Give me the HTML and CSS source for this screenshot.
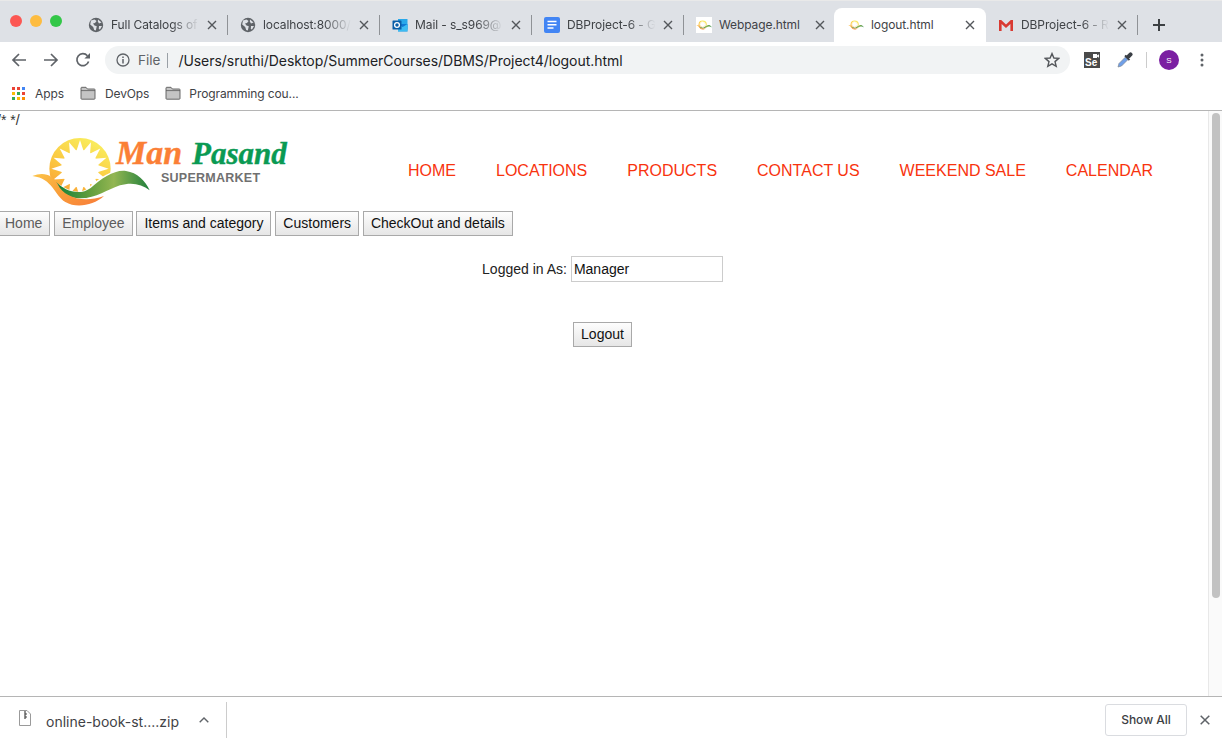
FILE: index.html
```html
<!DOCTYPE html>
<html lang="en">
<head>
    <meta charset="UTF-8">
    <title>logout.html</title>
    <link rel="stylesheet" href="styles.css">
</head>
<body>

    <!-- Shared icons -->
    <svg class="icon-defs" width="0" height="0" aria-hidden="true">
        <defs>
            <linearGradient id="sunFill" x1="0.7" y1="0" x2="0.2" y2="1">
                <stop offset="0" stop-color="#f9ee5e"/>
                <stop offset="0.55" stop-color="#fbc63f"/>
                <stop offset="1" stop-color="#f99a35"/>
            </linearGradient>
            <linearGradient id="leafFill" x1="0" y1="0" x2="1" y2="0">
                <stop offset="0" stop-color="#0f7f3a"/>
                <stop offset="0.35" stop-color="#5f9c3c"/>
                <stop offset="0.62" stop-color="#93b652"/>
                <stop offset="1" stop-color="#1f7f3c"/>
            </linearGradient>
            <linearGradient id="swooshFill" x1="0" y1="0" x2="1" y2="0.6">
                <stop offset="0" stop-color="#fcc448"/>
                <stop offset="0.5" stop-color="#f9a13a"/>
                <stop offset="1" stop-color="#f8843a"/>
            </linearGradient>
            <symbol id="logoMark" viewBox="90 75 360 220">
                <circle cx="240" cy="176" r="92" fill="url(#sunFill)"/>
                <g transform="translate(240 176)" fill="#fff">
                    <circle r="56"/>
                    <path id="ray" d="M-11 -52 L0 -86 L11 -52Z"/>
                    <use href="#ray" transform="rotate(22.5)"/>
                    <use href="#ray" transform="rotate(45)"/>
                    <use href="#ray" transform="rotate(67.5)"/>
                    <use href="#ray" transform="rotate(90)"/>
                    <use href="#ray" transform="rotate(112.5)"/>
                    <use href="#ray" transform="rotate(135)"/>
                    <use href="#ray" transform="rotate(157.5)"/>
                    <use href="#ray" transform="rotate(180)"/>
                    <use href="#ray" transform="rotate(202.5)"/>
                    <use href="#ray" transform="rotate(225)"/>
                    <use href="#ray" transform="rotate(247.5)"/>
                    <use href="#ray" transform="rotate(270)"/>
                    <use href="#ray" transform="rotate(292.5)"/>
                    <use href="#ray" transform="rotate(315)"/>
                    <use href="#ray" transform="rotate(337.5)"/>
                </g>
                <path d="M150 205 C190 235 235 262 268 232 C300 200 340 178 372 181 C410 186 436 212 449 241 C425 220 395 214 360 224 C320 236 290 268 235 268 C195 268 170 245 150 205Z" fill="#fff"/>
                <path d="M166 214 C195 245 240 258 272 234 C305 205 345 178 378 183 C412 188 436 212 449 241 C425 222 395 216 360 226 C322 238 285 268 235 265 C200 263 176 243 166 214Z" fill="url(#leafFill)"/>
                <path d="M97 198 C130 184 160 194 174 224 C190 258 245 282 312 258 C280 286 230 296 196 276 C162 256 160 206 97 198Z" fill="url(#swooshFill)"/>
            </symbol>
            <symbol id="globe" viewBox="0 0 16 16">
                <circle cx="8" cy="8" r="7.2" fill="#5f6368"/>
                <path d="M3 3.5 L6.5 2.6 L8.6 4 L7 6 L5 6.4 L6.5 8.6 L8.8 9.2 L7.8 13.6 L6.2 13 L5.2 10 L2.2 7.5Z M10 2.5 L13.6 5.5 L11 6.5 L9.8 4.6Z M11 9 L14 9 L12 12.5 L10.8 12Z" fill="#dee1e6"/>
            </symbol>
            <symbol id="closeX" viewBox="0 0 10 10">
                <path d="M1 1 L9 9 M9 1 L1 9" stroke="#54575b" stroke-width="1.4" fill="none"/>
            </symbol>
            <symbol id="folder" viewBox="0 0 16 14">
                <path d="M1 12.5 V2 C1 1.6 1.3 1.3 1.7 1.3 H6 L7.4 3 H14.3 C14.7 3 15 3.3 15 3.7 V12.5 C15 12.9 14.7 13.2 14.3 13.2 H1.7 C1.3 13.2 1 12.9 1 12.5Z" fill="#c4c4c4" stroke="#5a5a5a" stroke-width="0.9"/>
                <path d="M1 4.6 H15" stroke="#5a5a5a" stroke-width="0.8"/>
            </symbol>
        </defs>
    </svg>

    <div class="browser">

        <!-- Tab strip -->
        <div class="tab-strip">
            <div class="window-lights">
                <span class="light light-red"></span>
                <span class="light light-yellow"></span>
                <span class="light light-green"></span>
            </div>

            <div class="tab">
                <svg class="tab-icon"><use href="#globe"/></svg>
                <span class="tab-title fade">Full Catalogs of</span>
                <svg class="tab-close"><use href="#closeX"/></svg>
            </div>
            <span class="tab-sep"></span>

            <div class="tab">
                <svg class="tab-icon"><use href="#globe"/></svg>
                <span class="tab-title fade">localhost:8000/</span>
                <svg class="tab-close"><use href="#closeX"/></svg>
            </div>
            <span class="tab-sep"></span>

            <div class="tab">
                <svg class="tab-icon" viewBox="0 0 16 16">
                    <path d="M6 2 H15.5 V12.5 H6Z" fill="#28a8ea"/>
                    <path d="M6 7 L15.5 7 V14.5 H6Z" fill="#0f78d4"/>
                    <path d="M6 7 L10.7 10 L15.5 7 V14.5 H6Z" fill="#50d9ff" opacity="0.7"/>
                    <rect x="0.5" y="3.5" width="9" height="9" rx="0.6" fill="#0a5ea8"/>
                    <circle cx="5" cy="8" r="2.4" fill="none" stroke="#fff" stroke-width="1.3"/>
                </svg>
                <span class="tab-title fade">Mail - s_s969@</span>
                <svg class="tab-close"><use href="#closeX"/></svg>
            </div>
            <span class="tab-sep"></span>

            <div class="tab">
                <svg class="tab-icon" viewBox="0 0 16 16">
                    <rect width="16" height="16" rx="2" fill="#4285f4"/>
                    <path d="M3.5 4.5 H12.5 M3.5 7.8 H12.5 M3.5 11 H9.5" stroke="#fff" stroke-width="1.5"/>
                </svg>
                <span class="tab-title fade">DBProject-6 - G</span>
                <svg class="tab-close"><use href="#closeX"/></svg>
            </div>
            <span class="tab-sep"></span>

            <div class="tab">
                <svg class="tab-icon tab-icon-white"><use href="#logoMark"/></svg>
                <span class="tab-title">Webpage.html</span>
                <svg class="tab-close"><use href="#closeX"/></svg>
            </div>
            <span class="tab-sep tab-sep-hidden"></span>

            <div class="tab tab-active">
                <svg class="tab-icon"><use href="#logoMark"/></svg>
                <span class="tab-title">logout.html</span>
                <svg class="tab-close"><use href="#closeX"/></svg>
            </div>

            <div class="tab">
                <svg class="tab-icon" viewBox="0 0 16 16">
                    <path d="M1 14 V3 H3.2 L8 7.6 L12.8 3 H15 V14 H12.4 V7 L8 11 L3.6 7 V14Z" fill="#d93a32"/>
                </svg>
                <span class="tab-title fade">DBProject-6 - R</span>
                <svg class="tab-close"><use href="#closeX"/></svg>
            </div>
            <span class="tab-sep"></span>

            <svg class="new-tab" viewBox="0 0 12 12">
                <path d="M6 0 V12 M0 6 H12" stroke="#3c4043" stroke-width="2"/>
            </svg>
        </div>

        <!-- Toolbar -->
        <div class="toolbar">
            <svg class="nav-icon" viewBox="0 0 16 16">
                <path d="M15 8 H2 M8 2 L2 8 L8 14" fill="none" stroke="#5f6368" stroke-width="1.7"/>
            </svg>
            <svg class="nav-icon" viewBox="0 0 16 16">
                <path d="M1 8 H14 M8 2 L14 8 L8 14" fill="none" stroke="#5f6368" stroke-width="1.7"/>
            </svg>
            <svg class="nav-icon" viewBox="0 0 16 16">
                <path d="M13.6 9.6 A6 6 0 1 1 12.4 3.7" fill="none" stroke="#5f6368" stroke-width="1.7"/>
                <path d="M15 1 V6.6 H9.4Z" fill="#5f6368"/>
            </svg>

            <div class="address-bar">
                <svg class="info-icon" viewBox="0 0 14 14">
                    <circle cx="7" cy="7" r="6" fill="none" stroke="#5f6368" stroke-width="1.3"/>
                    <path d="M7 6 V10.5 M7 3.4 V5" stroke="#5f6368" stroke-width="1.5"/>
                </svg>
                <span class="address-scheme">File</span>
                <span class="address-sep"></span>
                <span class="address-url">/Users/sruthi/Desktop/SummerCourses/DBMS/Project4/logout.html</span>
                <svg class="star-icon" viewBox="0 0 16 16">
                    <path d="M8 1.6 L9.9 6 L14.7 6.4 L11 9.6 L12.2 14.3 L8 11.8 L3.8 14.3 L5 9.6 L1.3 6.4 L6.1 6Z" fill="none" stroke="#54575b" stroke-width="1.4"/>
                </svg>
            </div>

            <div class="extension-se">
                <svg class="se-camera" viewBox="0 0 6 4"><path d="M0 0 H4 V1.4 L6 0.3 V3.7 L4 2.6 V4 H0Z" fill="#fff"/></svg>
                <span class="se-label">Se</span>
            </div>
            <svg class="extension-dropper" viewBox="0 0 16 16">
                <path d="M1 15 L2 11.5 L8.5 5 L11 7.5 L4.5 14Z" fill="#6f9fe8" stroke="#7d8794" stroke-width="0.7"/>
                <path d="M8 3.5 L12.5 8 M9.5 5 L13 1.5 C13.8 0.8 15.2 2.2 14.5 3 L11 6.5" fill="#3a3f45" stroke="#3a3f45" stroke-width="1.8"/>
            </svg>
            <span class="toolbar-sep"></span>
            <span class="avatar">S</span>
            <svg class="menu-dots" viewBox="0 0 4 14">
                <circle cx="2" cy="2" r="1.5" fill="#5f6368"/>
                <circle cx="2" cy="7" r="1.5" fill="#5f6368"/>
                <circle cx="2" cy="12" r="1.5" fill="#5f6368"/>
            </svg>
        </div>

        <!-- Bookmarks -->
        <div class="bookmarks">
            <svg class="apps-icon" viewBox="0 0 13 13">
                <rect width="3" height="3" fill="#ea4335"/><rect x="5" width="3" height="3" fill="#ea4335"/><rect x="10" width="3" height="3" fill="#4285f4"/>
                <rect y="5" width="3" height="3" fill="#fbbc05"/><rect x="5" y="5" width="3" height="3" fill="#34a853"/><rect x="10" y="5" width="3" height="3" fill="#ea4335"/>
                <rect y="10" width="3" height="3" fill="#34a853"/><rect x="5" y="10" width="3" height="3" fill="#fbbc05"/><rect x="10" y="10" width="3" height="3" fill="#fb8c00"/>
            </svg>
            <span class="bookmark-label apps-label">Apps</span>
            <svg class="folder-icon"><use href="#folder"/></svg>
            <span class="bookmark-label devops-label">DevOps</span>
            <svg class="folder-icon"><use href="#folder"/></svg>
            <span class="bookmark-label programming-label">Programming cou...</span>
        </div>

        <!-- Page area -->
        <div class="viewport">
            <div class="page">
                <div class="stray-comment">/* */</div>

                <header class="site-header">
                    <svg class="site-logo" viewBox="0 0 260 74">
                        <use href="#logoMark" width="120" height="73.3"/>
                        <text class="logo-man" x="86" y="28.5">Man</text>
                        <text class="logo-pasand" x="162" y="28.5">Pasand</text>
                        <text class="logo-sub" x="131" y="47">SUPERMARKET</text>
                    </svg>
                    <nav class="site-nav">
                        <a href="#">HOME</a>
                        <a href="#">LOCATIONS</a>
                        <a href="#">PRODUCTS</a>
                        <a href="#">CONTACT US</a>
                        <a href="#">WEEKEND SALE</a>
                        <a href="#">CALENDAR</a>
                    </nav>
                </header>

                <div class="page-tabs">
                    <button class="page-btn muted">Home</button>
                    <button class="page-btn muted">Employee</button>
                    <button class="page-btn">Items and category</button>
                    <button class="page-btn">Customers</button>
                    <button class="page-btn">CheckOut and details</button>
                </div>

                <form class="logout-form">
                    <label class="logged-row">
                        Logged in As:
                        <input class="logged-input" type="text" value="Manager">
                    </label>
                    <button class="page-btn" type="button">Logout</button>
                </form>
            </div>

            <div class="scrollbar"><span class="scroll-thumb"></span></div>
        </div>

        <!-- Download shelf -->
        <div class="download-bar">
            <svg class="file-icon" viewBox="0 0 12 16">
                <path d="M0.5 0.5 H8 L11.5 4 V15.5 H0.5Z" fill="#fff" stroke="#9a9a9a"/>
                <path d="M6 1 V9 M6 4 H8 M6 7 H8" stroke="#444" stroke-width="1.2"/>
            </svg>
            <span class="download-name">online-book-st....zip</span>
            <svg class="chevron" viewBox="0 0 10 6">
                <path d="M0.7 5.3 L5 1 L9.3 5.3" fill="none" stroke="#5f6368" stroke-width="1.4"/>
            </svg>
            <span class="download-sep"></span>
            <button class="show-all">Show All</button>
            <svg class="shelf-close" viewBox="0 0 10 10">
                <path d="M0.7 0.7 L9.3 9.3 M9.3 0.7 L0.7 9.3" stroke="#5f6368" stroke-width="1.5"/>
            </svg>
        </div>
    </div>

</body>
</html>
```

FILE: styles.css
```css
/* Base */
body {
    margin: 0;
    font-family: 'Liberation Sans', Arial, sans-serif;
    background: #fff;
    overflow: hidden;
}

.icon-defs {
    position: absolute;
}

.browser {
    display: flex;
    flex-direction: column;
    height: 743px;
    overflow: hidden;
}

/* Tab strip */
.tab-strip {
    display: flex;
    align-items: flex-end;
    flex: none;
    box-sizing: border-box;
    height: 42px;
    background-color: #dee1e6;
    border-top: 1px solid #e9e9e9;
    font-family: 'Inter', 'Roboto', sans-serif;
}

.window-lights {
    display: flex;
    gap: 8px;
    flex: none;
    box-sizing: border-box;
    width: 76px;
    height: 41px;
    padding: 14px 0 0 10px;
}

.light {
    width: 12px;
    height: 12px;
    border-radius: 50%;
}

.light-red { background-color: #fc5753; }
.light-yellow { background-color: #fdbc40; }
.light-green { background-color: #33c748; }

.tab {
    display: flex;
    align-items: center;
    flex: none;
    box-sizing: border-box;
    width: 151px;
    height: 34px;
    padding: 0 10px 0 12px;
}

.tab-active {
    width: 152px;
    margin-left: -2px;
    padding-left: 14px;
    padding-right: 11px;
    background-color: #fff;
    border-radius: 8px 8px 0 0;
}

.tab-icon {
    flex: none;
    width: 16px;
    height: 16px;
}

.tab-icon-white {
    background-color: #fff;
}

.tab-title {
    flex: 1;
    min-width: 0;
    margin: 0 3px 2px 7px;
    white-space: nowrap;
    font-size: 12px;
    letter-spacing: -0.1px;
    color: #3f4246;
}

.tab-title.fade {
    -webkit-mask-image: linear-gradient(to right, #000 65%, transparent 95%);
    mask-image: linear-gradient(to right, #000 65%, transparent 95%);
}

.tab-close {
    flex: none;
    width: 10px;
    height: 10px;
}

.tab-sep {
    flex: none;
    width: 1px;
    height: 20px;
    margin-bottom: 7px;
    background-color: #8f9296;
}

.tab-sep-hidden {
    visibility: hidden;
}

.new-tab {
    flex: none;
    width: 12px;
    height: 12px;
    margin: 0 0 11px 15px;
}

/* Toolbar */
.toolbar {
    display: flex;
    align-items: center;
    flex: none;
    height: 36px;
    padding-left: 11px;
    background-color: #fff;
}

.nav-icon {
    flex: none;
    width: 16px;
    height: 16px;
    margin-right: 16px;
}

.nav-icon:nth-child(3) {
    margin-right: 14px;
}

.address-bar {
    display: flex;
    align-items: center;
    flex: none;
    box-sizing: border-box;
    width: 965px;
    height: 28px;
    padding: 0 10px 0 11px;
    border-radius: 14px;
    background-color: #f1f3f4;
    font-family: 'Inter', 'Roboto', sans-serif;
}

.info-icon {
    flex: none;
    width: 14px;
    height: 14px;
}

.address-scheme {
    margin-left: 8px;
    font-size: 13.5px;
    color: #5f6368;
}

.address-sep {
    width: 1px;
    height: 15px;
    margin: 0 10px 0 7px;
    background-color: #9aa0a6;
}

.address-url {
    flex: 1;
    font-size: 14px;
    letter-spacing: -0.04px;
    color: #202124;
}

.star-icon {
    flex: none;
    width: 16px;
    height: 16px;
}

.extension-se {
    position: relative;
    flex: none;
    box-sizing: border-box;
    width: 16px;
    height: 16px;
    margin-left: 14px;
    background-color: #4a4a4a;
}

.se-camera {
    position: absolute;
    top: 2px;
    right: 1px;
    width: 6px;
    height: 4px;
}

.se-label {
    position: absolute;
    left: 1px;
    bottom: 0;
    font-size: 10px;
    line-height: 10px;
    font-weight: bold;
    color: #fff;
}

.extension-dropper {
    flex: none;
    width: 16px;
    height: 16px;
    margin-left: 17px;
}

.toolbar-sep {
    flex: none;
    width: 1px;
    height: 16px;
    margin-left: 13px;
    background-color: #ccc;
}

.avatar {
    display: flex;
    align-items: center;
    justify-content: center;
    flex: none;
    width: 20px;
    height: 20px;
    margin-left: 12px;
    border-radius: 50%;
    background-color: #7b1fa2;
    font-size: 8px;
    color: #fff;
}

.menu-dots {
    flex: none;
    width: 4px;
    height: 14px;
    margin-left: 21px;
}

/* Bookmarks */
.bookmarks {
    display: flex;
    align-items: center;
    flex: none;
    box-sizing: border-box;
    height: 33px;
    padding: 0 0 2px 12px;
    background-color: #fff;
    border-bottom: 1px solid #b5b5b5;
    font-family: 'Inter', 'Roboto', sans-serif;
}

.apps-icon {
    flex: none;
    width: 13px;
    height: 13px;
    margin-right: 10px;
}

.bookmark-label {
    font-size: 12px;
    letter-spacing: -0.1px;
    color: #3f4246;
}

.apps-label { margin-right: 16px; }
.devops-label { margin-right: 16px; }
.programming-label { margin-left: -1px; }

.folder-icon {
    flex: none;
    width: 16px;
    height: 14px;
    margin-right: 9px;
}

/* Page */
.viewport {
    display: flex;
    flex: 1;
    min-height: 0;
}

.page {
    flex: 1;
    min-width: 0;
    margin-left: -3px;
    font-size: 14px;
    color: #222;
}

.stray-comment {
    height: 18px;
    font-size: 14px;
    line-height: 18px;
    color: #333;
}

.site-header {
    display: flex;
    align-items: flex-start;
    height: 82px;
}

.site-logo {
    flex: none;
    width: 260px;
    height: 74px;
    margin: 6px 0 0 33px;
    overflow: visible;
}

.logo-man,
.logo-pasand {
    font-family: 'Liberation Serif', serif;
    font-style: italic;
    font-weight: bold;
    stroke-width: 0.4px;
}

.logo-man { font-size: 34px; fill: #fb7f36; stroke: #fb7f36; }
.logo-pasand { font-size: 31px; fill: #0a9a53; stroke: #0a9a53; }

.logo-sub {
    font-size: 12.5px;
    font-weight: bold;
    letter-spacing: 0.25px;
    fill: #707070;
}

.site-nav {
    display: flex;
    gap: 40px;
    margin-left: auto;
    padding: 33px 55px 0 0;
}

.site-nav a {
    font-size: 16px;
    line-height: 18px;
    color: #f8330e;
    text-decoration: none;
}

.page-tabs {
    display: flex;
    gap: 3.9px;
}

.page-btn {
    box-sizing: border-box;
    height: 25px;
    padding: 0 7px 2px;
    border: 1px solid #a9a9a9;
    background: linear-gradient(to bottom, #fdfdfd, #e6e6e6);
    font-family: inherit;
    font-size: 14px;
    color: #111;
}

.page-btn.muted {
    color: #5c5c5c;
}

.logout-form {
    display: flex;
    flex-direction: column;
    align-items: center;
    gap: 40px;
    margin-top: 20px;
}

.logged-row {
    display: flex;
    align-items: center;
    gap: 4px;
}

.logged-input {
    box-sizing: border-box;
    width: 152px;
    height: 26px;
    padding: 0 2px;
    border: 1px solid #ccc;
    font-family: inherit;
    font-size: 14px;
    color: #111;
    outline: none;
}

.scrollbar {
    flex: none;
    box-sizing: border-box;
    width: 14px;
    padding: 2px 2px 0 3px;
    background-color: #fafafa;
    border-left: 1px solid #e8e8e8;
}

.scroll-thumb {
    display: block;
    height: 485px;
    border-radius: 4px;
    background-color: #c2c2c2;
}

/* Download shelf */
.download-bar {
    display: flex;
    align-items: center;
    flex: none;
    box-sizing: border-box;
    height: 47px;
    padding-left: 19px;
    background-color: #fff;
    border-top: 1px solid #b5b5b5;
    font-family: 'Inter', 'Roboto', sans-serif;
}

.file-icon {
    flex: none;
    width: 12px;
    height: 16px;
    margin: -4px 15px 0 0;
}

.download-name {
    width: 133px;
    margin-top: 3px;
    font-size: 14px;
    white-space: nowrap;
    color: #3f4246;
}

.chevron {
    flex: none;
    width: 10px;
    height: 6px;
    margin-left: 20px;
}

.download-sep {
    flex: none;
    width: 1px;
    height: 36px;
    margin-left: 17px;
    background-color: #ccc;
}

.show-all {
    box-sizing: border-box;
    width: 82px;
    height: 32px;
    margin-left: auto;
    padding-bottom: 2px;
    border: 1px solid #dadce0;
    border-radius: 3px;
    background-color: #fff;
    font-family: inherit;
    font-size: 12px;
    font-weight: 500;
    color: #3c4043;
}

.shelf-close {
    flex: none;
    width: 10px;
    height: 10px;
    margin: 0 12px 0 13px;
}
```
